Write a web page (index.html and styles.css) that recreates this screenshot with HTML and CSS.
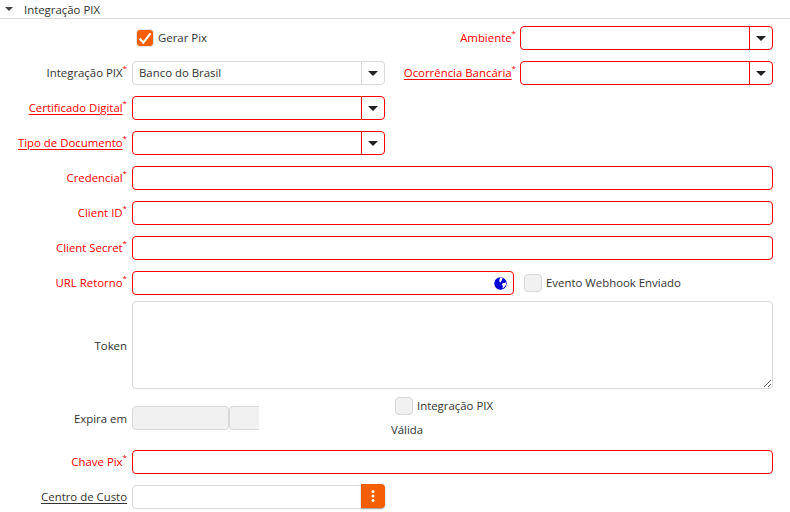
FILE: index.html
```html
<!DOCTYPE html>
<html lang="pt-BR">
<head>
<meta charset="utf-8">
<title>Integração PIX</title>
<link rel="stylesheet" href="styles.css">
</head>
<body>
<section class="panel">
  <header class="panel-head"><span class="caret"></span><span>Integração PIX</span></header>
  <form class="form">
    <div class="row">
      <div class="half check-cell">
        <span class="check on"><svg width="18" height="18" viewBox="0 0 18 18"><path d="M3.6 9.4 7.3 13.6 14.6 4.4" fill="none" stroke="#fff" stroke-width="2.2"/></svg></span>
        <span class="txt">Gerar Pix</span>
      </div>
      <span class="label label-r err">Ambiente<sup>*</sup></span>
      <div class="select bad right"><i></i><b><span class="arrow"></span></b></div>
    </div>
    <div class="row">
      <span class="label">Integração PIX<sup class="err">*</sup></span>
      <div class="select half-ctl"><i>Banco do Brasil</i><b><span class="arrow"></span></b></div>
      <span class="label label-r err"><u>Ocorrência Bancária</u><sup>*</sup></span>
      <div class="select bad right"><i></i><b><span class="arrow"></span></b></div>
    </div>
    <div class="row">
      <span class="label err"><u>Certificado Digital</u><sup>*</sup></span>
      <div class="select bad half-ctl"><i></i><b><span class="arrow"></span></b></div>
    </div>
    <div class="row">
      <span class="label err"><u>Tipo de Documento</u><sup>*</sup></span>
      <div class="select bad half-ctl"><i></i><b><span class="arrow"></span></b></div>
    </div>
    <div class="row">
      <span class="label err">Credencial<sup>*</sup></span>
      <div class="input bad grow"></div>
    </div>
    <div class="row">
      <span class="label err">Client ID<sup>*</sup></span>
      <div class="input bad grow"></div>
    </div>
    <div class="row">
      <span class="label err">Client Secret<sup>*</sup></span>
      <div class="input bad grow"></div>
    </div>
    <div class="row">
      <span class="label err">URL Retorno<sup>*</sup></span>
      <div class="input bad url">
        <svg class="globe" width="13" height="13" viewBox="0 0 13 13"><circle cx="6.5" cy="6.5" r="6.2" fill="#0000d8"/><path d="M6.2.6 8.6 1 8 3 6.6 5.4 5.2 4.2 5.6 2ZM8.6 6.2 12 5.6 12.2 7.6 10 10.6 8.6 11.4 8.8 8.8 7.8 7.4Z" fill="#fff"/></svg>
      </div>
      <div class="check-cell evento"><span class="check"></span><span class="txt">Evento Webhook Enviado</span></div>
    </div>
    <div class="row token-row">
      <span class="label flush">Token</span>
      <textarea class="area" aria-label="Token"></textarea>
    </div>
    <div class="row expira-row">
      <span class="label flush">Expira em</span>
      <div class="input off date"></div>
      <div class="input off time"></div>
      <div class="valida">
        <div class="check-cell"><span class="check"></span><span class="txt">Integração PIX</span></div>
        <div class="valida-text">Válida</div>
      </div>
    </div>
    <div class="row chave-row">
      <span class="label err">Chave Pix<sup>*</sup></span>
      <div class="input bad grow"></div>
    </div>
    <div class="row">
      <span class="label"><u>Centro de Custo</u></span>
      <div class="select half-ctl lookup"><i></i><b><svg width="4" height="14" viewBox="0 0 4 14"><circle cx="2" cy="2.5" r="1.5" fill="#fff"/><circle cx="2" cy="7" r="1.5" fill="#fff"/><circle cx="2" cy="11.5" r="1.5" fill="#fff"/></svg></b></div>
    </div>
  </form>
</section>
</body>
</html>
```
FILE: styles.css
```css
* { box-sizing: border-box; }
html, body { margin: 0; padding: 0; background: #fff; }
body {
  width: 790px;
  height: 512px;
  overflow: hidden;
  font-family: "Open Sans", "Noto Sans", sans-serif;
  font-size: 11.4px;
  color: #333;
}
.panel-head {
  height: 19px;
  border-bottom: 1px solid #d9d9d9;
  display: flex;
  align-items: center;
  line-height: 17px;
  padding-left: 5px;
}
.caret {
  width: 0; height: 0;
  border-left: 4px solid transparent;
  border-right: 4px solid transparent;
  border-top: 4px solid #444;
  margin-right: 11px;
}
.form {
  display: flex;
  flex-direction: column;
  gap: 11px;
  padding-top: 7px;
  width: 773px;
}
.row { display: flex; align-items: center; height: 24px; }
.label {
  width: 127px;
  text-align: right;
  white-space: nowrap;
  margin-right: 5px;
  padding-bottom: 2px;
  flex: none;
  color: #333;
}
.label.flush { padding-bottom: 0; }
.label-r { width: 131px; margin-right: 4px; }
.label sup {
  font-size: 8px;
  line-height: 0;
  position: relative;
  vertical-align: baseline;
  top: -6px;
}
.err, .err u { color: #f00; }
.label.err sup, sup.err { color: #f00; }
u { text-underline-offset: 2px; }
.half { width: 385px; flex: none; }
.check-cell { display: flex; align-items: center; gap: 4px; }
.txt { padding-bottom: 2px; }
.row > .half.check-cell { padding-left: 136px; }
.check {
  width: 18px; height: 18px;
  border: 1px solid #d9d9d9;
  border-radius: 4px;
  background: #f1f1f1;
  flex: none;
  display: block;
}
.check.on { background: #f45f05; border-color: #e4e4e4; }
.check.on svg { display: block; margin: -1px; }
.select, .input {
  height: 24px;
  border: 1px solid #d9d9d9;
  border-radius: 4px;
  background: #fff;
  display: flex;
  align-items: stretch;
}
.bad { border-color: #f00; }
.half-ctl { width: 253px; flex: none; }
.right { flex: 1; }
.select i {
  flex: 1;
  font-style: normal;
  padding-left: 6px;
  line-height: 22px;
  color: #333;
}
.select b {
  width: 23px;
  border-left: 1px solid #d9d9d9;
  display: flex;
  align-items: center;
  justify-content: center;
  flex: none;
}
.select.bad b { border-left-color: #f00; }
.arrow {
  width: 0; height: 0;
  border-left: 5px solid transparent;
  border-right: 5px solid transparent;
  border-top: 5px solid #222;
}
.lookup b {
  background: #f45f05;
  border: none;
  border-radius: 0 4px 4px 0;
  margin: -2px -1px 0 0;
  width: 24px;
  height: 24px;
  box-shadow: 0 1px 2px rgba(0,0,0,.3);
}
.grow { flex: 1; }
.url {
  width: 382px;
  flex: none;
  justify-content: flex-end;
  align-items: center;
  padding-right: 6px;
}
.globe { display: block; }
.evento { margin-left: 10px; }
.token-row { height: 88px; margin-top: -5px; }
.area {
  flex: 1;
  height: 88px;
  border: 1px solid #d9d9d9;
  border-radius: 4px;
  outline: none;
  background: #fff;
  margin: 0;
  display: block;
}
.expira-row { margin-top: 6px; }
.off { background: #f1f1f1; flex: none; }
.date { width: 97px; }
.time { width: 30px; border-right: 0; border-radius: 4px 0 0 4px; }
.valida { margin-left: 132px; margin-top: -2px; width: 110px; height: 40px; flex: none; }
.valida .check-cell { margin-left: 4px; }
.valida-text { margin-top: 6px; line-height: 17px; }
.chave-row { margin-top: 9px; }
```
